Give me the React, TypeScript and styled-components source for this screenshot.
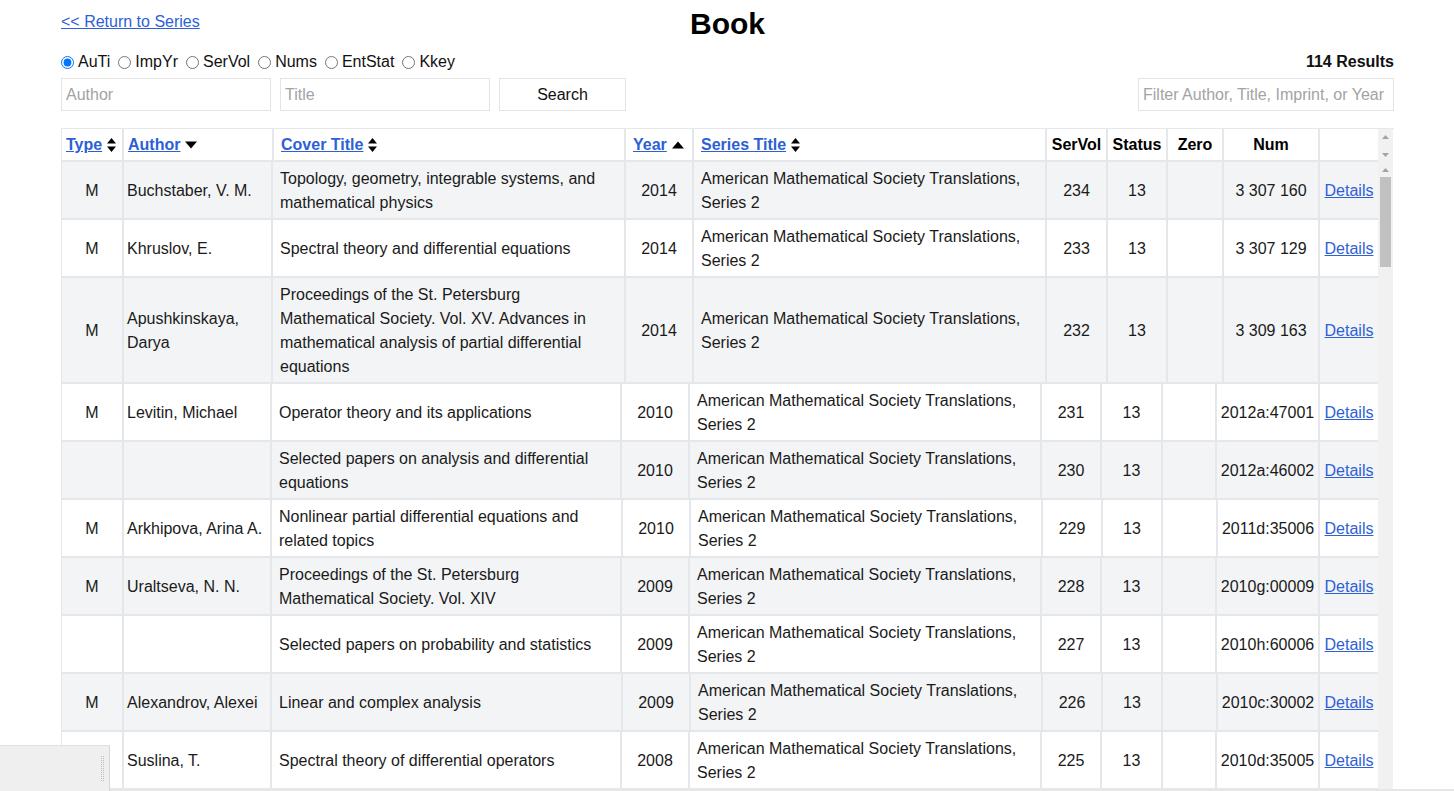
import React from 'react';
import styled, { createGlobalStyle } from 'styled-components';

const GlobalStyle = createGlobalStyle`
  html, body {
    margin: 0;
    padding: 0;
    overflow: hidden;
    background: #ffffff;
    font-family: "Liberation Sans", Arial, sans-serif;
    font-size: 16px;
    color: #111111;
  }
`;

const LINK = '#2d5fd6';
const LINE = '#e5e7eb';

/** column widths, borders included */
const HEAD = [60, 150, 352, 68, 353, 61, 60, 56, 96, 60];
const WIDE = [60, 149, 353, 68, 353, 61, 60, 56, 96, 60];
const NARROW = [60, 148, 350, 68, 352, 60, 61, 54, 103, 60];
const SHIFT = [60, 148, 351, 68, 352, 60, 60, 55, 102, 60];

interface Book {
  type: string;
  author: string;
  title: string;
  year: string;
  series: string;
  vol: string;
  status: string;
  num: string;
  cols: number[];
}

const SERIES = 'American Mathematical Society Translations, Series 2';

const books: Book[] = [
  { type: 'M', author: 'Buchstaber, V. M.', title: 'Topology, geometry, integrable systems, and mathematical physics', year: '2014', series: SERIES, vol: '234', status: '13', num: '3 307 160', cols: WIDE },
  { type: 'M', author: 'Khruslov, E.', title: 'Spectral theory and differential equations', year: '2014', series: SERIES, vol: '233', status: '13', num: '3 307 129', cols: WIDE },
  { type: 'M', author: 'Apushkinskaya, Darya', title: 'Proceedings of the St. Petersburg Mathematical Society. Vol. XV. Advances in mathematical analysis of partial differential equations', year: '2014', series: SERIES, vol: '232', status: '13', num: '3 309 163', cols: WIDE },
  { type: 'M', author: 'Levitin, Michael', title: 'Operator theory and its applications', year: '2010', series: SERIES, vol: '231', status: '13', num: '2012a:47001', cols: NARROW },
  { type: '', author: '', title: 'Selected papers on analysis and differential equations', year: '2010', series: SERIES, vol: '230', status: '13', num: '2012a:46002', cols: NARROW },
  { type: 'M', author: 'Arkhipova, Arina A.', title: 'Nonlinear partial differential equations and related topics', year: '2010', series: SERIES, vol: '229', status: '13', num: '2011d:35006', cols: SHIFT },
  { type: 'M', author: 'Uraltseva, N. N.', title: 'Proceedings of the St. Petersburg Mathematical Society. Vol. XIV', year: '2009', series: SERIES, vol: '228', status: '13', num: '2010g:00009', cols: NARROW },
  { type: '', author: '', title: 'Selected papers on probability and statistics', year: '2009', series: SERIES, vol: '227', status: '13', num: '2010h:60006', cols: NARROW },
  { type: 'M', author: 'Alexandrov, Alexei', title: 'Linear and complex analysis', year: '2009', series: SERIES, vol: '226', status: '13', num: '2010c:30002', cols: SHIFT },
  { type: 'M', author: 'Suslina, T.', title: 'Spectral theory of differential operators', year: '2008', series: SERIES, vol: '225', status: '13', num: '2010d:35005', cols: NARROW },
];

const Page = styled.div`
  padding: 0 60px 0 61px;
`;

const TopBar = styled.div`
  display: grid;
  grid-template-columns: 1fr auto 1fr;
  align-items: start;
  padding-top: 6px;
`;

const BackLink = styled.a`
  margin-top: 7px;
  line-height: 18px;
  color: ${LINK};
  text-decoration: underline;
  cursor: pointer;
  justify-self: start;
`;

const Title = styled.h1`
  margin: 0;
  font-size: 30px;
  line-height: 36px;
  font-weight: 700;
  color: #000;
`;

const OptionsRow = styled.div`
  display: flex;
  align-items: center;
  justify-content: space-between;
  height: 18px;
  margin-top: 11px;
`;

const Radios = styled.div`
  display: flex;
  align-items: center;
`;

const RadioLabel = styled.label`
  display: inline-flex;
  align-items: center;
  margin-right: 8px;
  line-height: 18px;

  input {
    margin: 0 4px 0 0;
    width: 13px;
    height: 13px;
  }
`;

const Results = styled.div`
  font-weight: 700;
  color: #111;
`;

const SearchRow = styled.div`
  display: flex;
  align-items: center;
  margin-top: 7px;
  height: 33px;
`;

const TextInput = styled.input<{ $w: number }>`
  box-sizing: border-box;
  width: ${(p) => p.$w}px;
  height: 33px;
  margin-right: 9px;
  padding: 0 4px;
  border: 1px solid #e3e3e3;
  font-family: inherit;
  font-size: 16px;
  color: #111;
  outline: none;

  &::placeholder {
    color: #a3a3a3;
  }
`;

const SearchButton = styled.button`
  box-sizing: border-box;
  width: 127px;
  height: 33px;
  border: 1px solid #e3e3e3;
  background: #fff;
  font-family: inherit;
  font-size: 16px;
  color: #111;
`;

const FilterInput = styled(TextInput)`
  margin: 0 0 0 auto;
`;

const TableWrap = styled.div`
  width: 1332px;
  margin-top: 17px;
  border-top: 1px solid ${LINE};
  border-left: 1px solid ${LINE};
`;

const HeadArea = styled.div`
  display: flex;
  height: 33px;
`;

const BodyArea = styled.div`
  display: flex;
  height: 628px;
  overflow: hidden;
`;

const Rows = styled.div`
  width: 1316px;
  flex: none;
`;

/* scrollbar rails are drawn, the page itself does not scroll */
const Rail = styled.div`
  width: 15px;
  flex: none;
  display: flex;
  flex-direction: column;
  background: #f1f1f1;
`;

const RailButton = styled.div<{ $end?: boolean }>`
  height: 15px;
  display: flex;
  align-items: center;
  justify-content: center;
  flex: none;
  margin-top: ${(p) => (p.$end ? 'auto' : '0')};
`;

const Thumb = styled.div`
  height: 90px;
  margin: 0 2px;
  background: #c1c1c1;
`;

const Row = styled.div<{ $cols: number[]; $shade?: boolean }>`
  display: grid;
  grid-template-columns: ${(p) => p.$cols.map((c) => `${c}px`).join(' ')};
  background: ${(p) => (p.$shade ? '#f3f4f6' : '#ffffff')};
  border-bottom: 2px solid ${LINE};
`;

const Cell = styled.div<{ $center?: boolean; $wide?: boolean; $head?: boolean }>`
  box-sizing: border-box;
  display: flex;
  align-items: center;
  justify-content: ${(p) => (p.$center ? 'center' : 'flex-start')};
  text-align: ${(p) => (p.$center ? 'center' : 'left')};
  padding: ${(p) => (p.$head ? '4px' : '5px')} ${(p) => (p.$wide ? '7px' : '3px')} 3px;
  line-height: 24px;
  font-weight: ${(p) => (p.$head ? 700 : 400)};
  color: ${(p) => (p.$head ? '#000' : '#1a1a1a')};
  border-left: 2px solid ${LINE};
  white-space: nowrap;

  &:first-child {
    border-left: none;
  }

  span {
    white-space: normal;
  }
`;

const HeadCell = styled(Cell)`
  padding-left: ${(p) => (p.$wide ? '7px' : '4px')};
`;

const SortLink = styled.a`
  color: ${LINK};
  text-decoration: underline;
  font-weight: 700;
  cursor: pointer;
`;

const SortIcon = styled.svg`
  margin-left: 5px;
  flex: none;
`;

const DetailsLink = styled.a`
  color: ${LINK};
  text-decoration: underline;
  cursor: pointer;
`;

const Dock = styled.div`
  position: fixed;
  left: 0;
  bottom: 0;
  width: 110px;
  height: 46px;
  background: #efefef;
  border-right: 1px solid #d6d6d6;
  border-top: 1px solid #e2e2e2;
  display: flex;
  align-items: center;
  justify-content: flex-end;
  padding-right: 5px;
  box-sizing: border-box;
`;

const Grip = styled.div`
  width: 4px;
  height: 26px;
  background: conic-gradient(#bdbdbd 25%, transparent 0) 0 0 / 2px 2px;
`;

const BottomEdge = styled.div`
  position: fixed;
  left: 0;
  right: 0;
  bottom: 0;
  height: 2px;
  background: #e6e6e6;
`;

type SortDir = 'both' | 'up' | 'down';

const Sort = ({ dir }: { dir: SortDir }) => {
  if (dir === 'down') {
    return (
      <SortIcon width="12" height="8" viewBox="0 0 12 8">
        <path d="M0 0.5 H12 L6 7.5 Z" fill="#000" />
      </SortIcon>
    );
  }
  if (dir === 'up') {
    return (
      <SortIcon width="12" height="8" viewBox="0 0 12 8">
        <path d="M6 0.5 L12 7.5 H0 Z" fill="#000" />
      </SortIcon>
    );
  }
  return (
    <SortIcon width="9" height="14" viewBox="0 0 9 14">
      <path d="M4.5 0 L9 5.5 H0 Z M0 8.5 H9 L4.5 14 Z" fill="#000" />
    </SortIcon>
  );
};

const Arrow = ({ up }: { up?: boolean }) => (
  <svg width="7" height="4" viewBox="0 0 7 4">
    <path d={up ? 'M3.5 0 L7 4 H0 Z' : 'M0 0 H7 L3.5 4 Z'} fill="#a3a3a3" />
  </svg>
);

const options = ['AuTi', 'ImpYr', 'SerVol', 'Nums', 'EntStat', 'Kkey'];

const App = () => {
  return (
    <>
      <GlobalStyle />
      <Page>
        <TopBar>
          <BackLink>{'<< Return to Series'}</BackLink>
          <Title>Book</Title>
          <div />
        </TopBar>

        <OptionsRow>
          <Radios>
            {options.map((o, i) => (
              <RadioLabel key={o}>
                <input type="radio" name="order" defaultChecked={i === 0} />
                {o}
              </RadioLabel>
            ))}
          </Radios>
          <Results>114 Results</Results>
        </OptionsRow>

        <SearchRow>
          <TextInput $w={210} placeholder="Author" />
          <TextInput $w={210} placeholder="Title" />
          <SearchButton>Search</SearchButton>
          <FilterInput $w={256} placeholder="Filter Author, Title, Imprint, or Year" />
        </SearchRow>

        <TableWrap>
          <HeadArea>
            <Rows>
              <Row $cols={HEAD}>
                <HeadCell $head>
                  <SortLink>Type</SortLink>
                  <Sort dir="both" />
                </HeadCell>
                <HeadCell $head>
                  <SortLink>Author</SortLink>
                  <Sort dir="down" />
                </HeadCell>
                <HeadCell $head $wide>
                  <SortLink>Cover Title</SortLink>
                  <Sort dir="both" />
                </HeadCell>
                <HeadCell $head $wide>
                  <SortLink>Year</SortLink>
                  <Sort dir="up" />
                </HeadCell>
                <HeadCell $head $wide>
                  <SortLink>Series Title</SortLink>
                  <Sort dir="both" />
                </HeadCell>
                <Cell $head $center>SerVol</Cell>
                <Cell $head $center>Status</Cell>
                <Cell $head $center>Zero</Cell>
                <Cell $head $center>Num</Cell>
                <Cell $head />
              </Row>
            </Rows>
            <Rail>
              <RailButton>
                <Arrow up />
              </RailButton>
              <RailButton $end>
                <Arrow />
              </RailButton>
            </Rail>
          </HeadArea>

          <BodyArea>
            <Rows>
              {books.map((b, i) => (
                <Row key={b.vol} $cols={b.cols} $shade={i % 2 === 0}>
                  <Cell $center>{b.type}</Cell>
                  <Cell>
                    <span>{b.author}</span>
                  </Cell>
                  <Cell $wide>
                    <span>{b.title}</span>
                  </Cell>
                  <Cell $center>{b.year}</Cell>
                  <Cell $wide>
                    <span>{b.series}</span>
                  </Cell>
                  <Cell $center>{b.vol}</Cell>
                  <Cell $center>{b.status}</Cell>
                  <Cell $center />
                  <Cell $center>{b.num}</Cell>
                  <Cell $center>
                    <DetailsLink>Details</DetailsLink>
                  </Cell>
                </Row>
              ))}
            </Rows>
            <Rail>
              <RailButton>
                <Arrow up />
              </RailButton>
              <Thumb />
            </Rail>
          </BodyArea>
        </TableWrap>
      </Page>
      <BottomEdge />
      <Dock>
        <Grip />
      </Dock>
    </>
  );
};

export default App;
